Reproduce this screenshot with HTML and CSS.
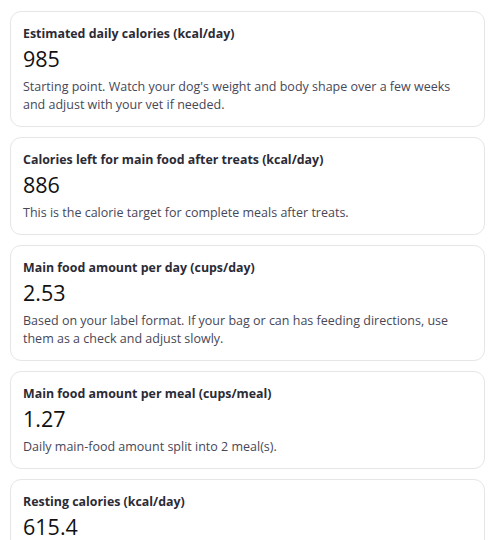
FILE: index.html
```html
<!DOCTYPE html>
<html>
<head>
<meta charset="utf-8">
<link rel="stylesheet" href="styles.css">
</head>
<body>
<div class="list">
  <div class="card">
    <div class="label">Estimated daily calories (kcal/day)</div>
    <div class="value">985</div>
    <div class="note">Starting point. Watch your dog's weight and body shape over a few weeks and adjust with your vet if needed.</div>
  </div>
  <div class="card">
    <div class="label">Calories left for main food after treats (kcal/day)</div>
    <div class="value">886</div>
    <div class="note">This is the calorie target for complete meals after treats.</div>
  </div>
  <div class="card">
    <div class="label">Main food amount per day (cups/day)</div>
    <div class="value">2.53</div>
    <div class="note">Based on your label format. If your bag or can has feeding directions, use them as a check and adjust slowly.</div>
  </div>
  <div class="card">
    <div class="label">Main food amount per meal (cups/meal)</div>
    <div class="value">1.27</div>
    <div class="note">Daily main-food amount split into 2 meal(s).</div>
  </div>
  <div class="card">
    <div class="label">Resting calories (kcal/day)</div>
    <div class="value">615.4</div>
    <div class="note">&nbsp;</div>
  </div>
</div>
</body>
</html>
```

FILE: styles.css
```css
html, body {
  margin: 0;
  padding: 0;
  background: #ffffff;
}
body {
  font-family: "Open Sans", "Noto Sans", sans-serif;
}
.list {
  display: flex;
  flex-direction: column;
  gap: 10.6px;
  padding: 11px 10px 10px 10px;
}
.card {
  border: 1px solid #e6e6e6;
  border-radius: 11px;
  padding: 13px 12px 11.5px 12px;
  display: flex;
  flex-direction: column;
}
.label {
  font-size: 12.4px;
  font-weight: 700;
  color: #2b2b36;
  line-height: 18px;
}
.value {
  font-size: 21.5px;
  color: #111111;
  line-height: 30px;
  margin-top: 1px;
}
.note {
  font-size: 12.5px;
  color: #474757;
  line-height: 18px;
  margin-top: 4px;
}
```
